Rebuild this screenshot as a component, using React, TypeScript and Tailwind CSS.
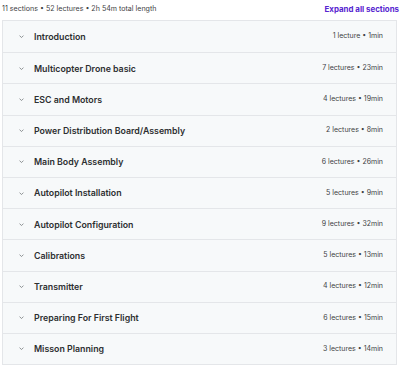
const SECTIONS: { title: string; meta: string }[] = [
  { title: "Introduction", meta: "1 lecture • 1min" },
  { title: "Multicopter Drone basic", meta: "7 lectures • 23min" },
  { title: "ESC and Motors", meta: "4 lectures • 19min" },
  { title: "Power Distribution Board/Assembly", meta: "2 lectures • 8min" },
  { title: "Main Body Assembly", meta: "6 lectures • 26min" },
  { title: "Autopilot Installation", meta: "5 lectures • 9min" },
  { title: "Autopilot Configuration", meta: "9 lectures • 32min" },
  { title: "Calibrations", meta: "5 lectures • 13min" },
  { title: "Transmitter", meta: "4 lectures • 12min" },
  { title: "Preparing For First Flight", meta: "6 lectures • 15min" },
  { title: "Misson Planning", meta: "3 lectures • 14min" },
];

function Chevron() {
  return (
    <svg viewBox="0 0 10 10" className="w-[7px] h-[7px] text-[#55595c]" fill="none">
      <path d="M2.2 3.8 L5 6.4 L7.8 3.8" stroke="currentColor" strokeWidth="0.9" />
    </svg>
  );
}

export default function App() {
  return (
    <div
      className="w-[400px] h-[367px] bg-white overflow-hidden pl-[2px] pr-[3px]"
      style={{ fontFamily: "Inter, 'Noto Sans', sans-serif" }}
    >
      <div className="flex items-center justify-between h-[20px] pb-[1px]">
        <span className="text-[7.1px] text-[#3e4143]">
          11 sections • 52 lectures • 2h 54m total length
        </span>
        <span className="text-[7.9px] font-bold text-[#5624d0] mr-[-2px]">
          Expand all sections
        </span>
      </div>
      <div className="border border-[#e4e6e9]">
        {SECTIONS.map((s, i) => (
          <div
            key={s.title}
            className={
              "flex items-center h-[31.2px] bg-[#f7f9fa] pl-[15px] pr-[13px] " +
              (i > 0 ? "border-t border-[#e4e6e9]" : "")
            }
          >
            <Chevron />
            <span className="ml-[9px] text-[8.8px] font-semibold text-[#2d2f31]">
              {s.title}
            </span>
            <span className="ml-auto text-[7px] text-[#3e4143]">{s.meta}</span>
          </div>
        ))}
      </div>
    </div>
  );
}
